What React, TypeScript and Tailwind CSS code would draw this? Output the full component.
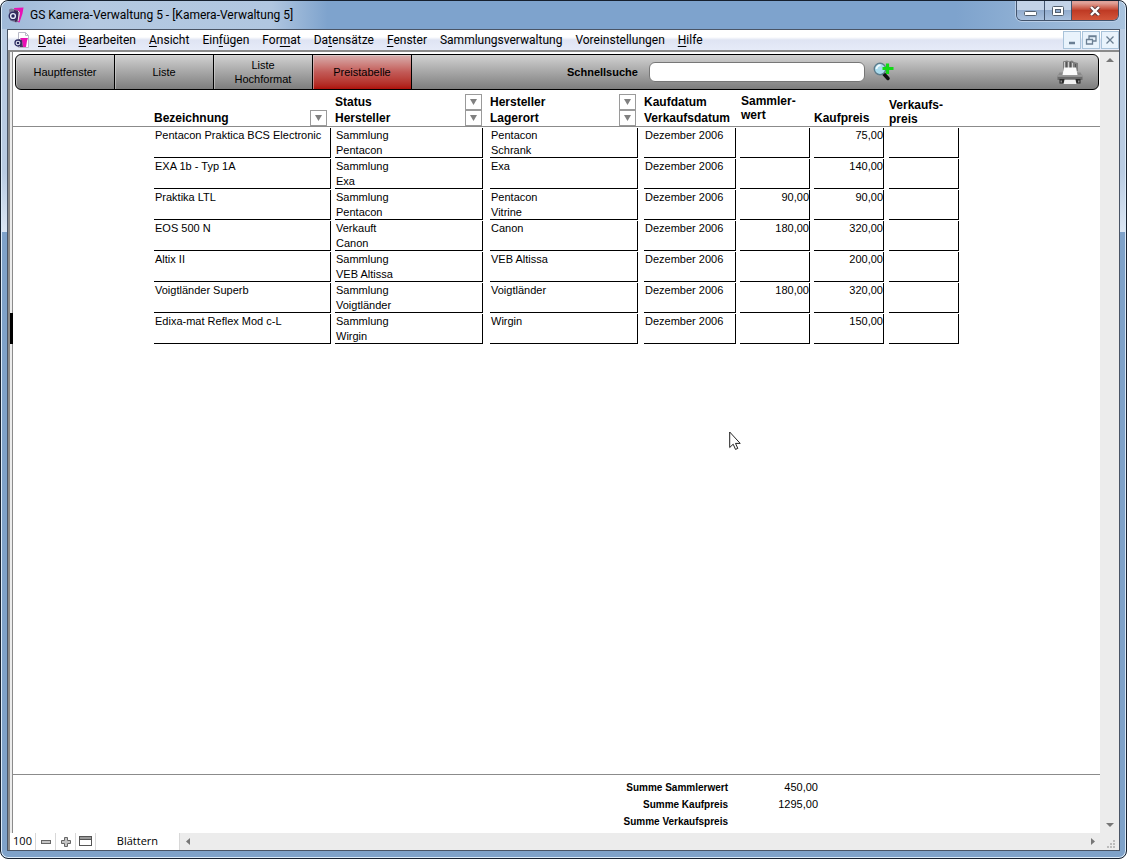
import { Fragment } from "react"

// [before, mnemonic, after]
const menuItems = [
  ["", "D", "atei"],
  ["", "B", "earbeiten"],
  ["", "A", "nsicht"],
  ["Ein", "f", "ügen"],
  ["For", "m", "at"],
  ["Da", "t", "ensätze"],
  ["", "F", "enster"],
  ["Sammlungsverwaltung", "", ""],
  ["Voreinstellungen", "", ""],
  ["", "H", "ilfe"],
]

const tabs = ["Hauptfenster", "Liste", "Liste Hochformat", "Preistabelle"]

const cameras = [
  { name: "Pentacon Praktica BCS Electronic", status: "Sammlung", maker: "Pentacon", place: "Schrank", value: "", price: "75,00" },
  { name: "EXA 1b - Typ 1A", status: "Sammlung", maker: "Exa", place: "", value: "", price: "140,00" },
  { name: "Praktika LTL", status: "Sammlung", maker: "Pentacon", place: "Vitrine", value: "90,00", price: "90,00" },
  { name: "EOS 500 N", status: "Verkauft", maker: "Canon", place: "", value: "180,00", price: "320,00" },
  { name: "Altix II", status: "Sammlung", maker: "VEB Altissa", place: "", value: "", price: "200,00" },
  { name: "Voigtländer Superb", status: "Sammlung", maker: "Voigtländer", place: "", value: "180,00", price: "320,00" },
  { name: "Edixa-mat Reflex Mod c-L", status: "Sammlung", maker: "Wirgin", place: "", value: "", price: "150,00", active: true },
]

const sums = [
  ["Summe Sammlerwert", "450,00"],
  ["Summe Kaufpreis", "1295,00"],
  ["Summe Verkaufspreis", ""],
]

function AppIcon() {
  return (
    <svg viewBox="0 0 16 16" className="h-4 w-4" aria-hidden="true">
      <path d="M6 1l9.500-.5-1 6-3 9-4-1z" fill="#e810b4" />
      <path d="M1 2.500l2-1 7 1.500 2 2-1 9-3 1.500-6-2z" fill="#7d7b98" />
      <path d="M6 3l4 1v10l-3 1z" fill="#3f2b52" />
      <path d="M10 4l1.500 1.500L10 14" fill="none" stroke="#f3d9ee" />
      <circle cx="5" cy="9" r="3.800" fill="#e9ecf7" stroke="#2d2d62" strokeWidth="1.400" />
      <circle cx="5" cy="9" r="1.700" fill="#26265c" />
    </svg>
  )
}

function DocIcon() {
  return (
    <svg viewBox="0 0 16 16" className="h-4 w-4" aria-hidden="true">
      <path d="M4.500 .5h7l3 3v12h-10z" fill="#fff" stroke="#b9b9c6" />
      <path d="M11.500 .5v3h3" fill="none" stroke="#b9b9c6" />
      <path d="M6 6h8l-1 3-1 6H9L8 9z" fill="#e810b4" />
      <path d="M5 7l3 1 1 7H6z" fill="#4b3260" />
      <circle cx="4" cy="11" r="3" fill="#e9ecf7" stroke="#2d2d62" strokeWidth="1.300" />
      <circle cx="4" cy="11" r="1.300" fill="#26265c" />
    </svg>
  )
}

function SearchAddIcon() {
  return (
    <svg viewBox="0 0 21 20" className="h-5 w-[21px]" aria-hidden="true">
      <path d="M10 11l5 5.500" stroke="#111" strokeWidth="3.500" strokeLinecap="round" />
      <circle cx="7" cy="7" r="5.700" fill="#a9dcee" stroke="#5d7c8c" strokeWidth="1.400" />
      <path d="M3.500 7a3.500 3.500 0 0 1 4-3.500" fill="none" stroke="#f2fcff" strokeWidth="1.800" />
      <path d="M14.500 1.500v10.500M9.500 6.500h11" stroke="#12d916" strokeWidth="3.200" />
    </svg>
  )
}

function PrinterIcon() {
  return (
    <svg viewBox="0 0 26 25" className="h-[25px] w-[26px]" aria-hidden="true">
      <path d="M6 1.500l4-1 2 1 3-1 2 1.500 4 1v8H6z" fill="#7d7d7d" />
      <path d="M7.500 2v6M11.500 2v6M15.500 3v6" stroke="#cfcfcf" />
      <path d="M9.500 2v6M13.500 2v6M18.500 4v6" stroke="#565656" />
      <path d="M2.500 12.500h21l2 3.500H.5z" fill="#8a8a8a" />
      <path d="M7 7.500h12l1.500 7.500h-15z" fill="#fbfbfb" />
      <path d="M.5 15.500h25V20H.5z" fill="#6a6a6a" />
      <path d="M.5 15.500h25v1H.5z" fill="#b5b5b5" />
      <path d="M2.500 19h21v4.500h-21z" fill="#2b2b2b" />
      <path d="M7.500 19.500h11l1 4.500h-13z" fill="#f2f2f2" />
      <path d="M3.500 20.500h1.500v2H3.500zM21 20.500h1.500v2H21z" fill="#8e8e8e" />
    </svg>
  )
}

function FilterButton({ label }: { label: string }) {
  return (
    <button aria-label={label} className="flex h-4 w-[17px] items-center justify-center border border-[#9a9a9a] bg-white">
      <svg viewBox="0 0 7 6" className="h-1.5 w-[7px]" aria-hidden="true">
        <path d="M0 0h7L3.500 6z" fill="#808080" />
      </svg>
    </button>
  )
}

function SortHeader({ lines }: { lines: string[] }) {
  return (
    <div className="mr-2 text-[12px] leading-4">
      {lines.map((line) => (
        <div key={line} className="flex justify-between">
          {line}
          <FilterButton label={`${line} sortieren`} />
        </div>
      ))}
    </div>
  )
}

function Cell({ lines, gap, right }: { lines: string[]; gap: string; right?: boolean }) {
  return (
    <td className={`p-0 pt-px ${gap}`}>
      <div className={`h-[30px] whitespace-nowrap border-b border-r border-black leading-[15px] ${right ? "text-right" : "pl-px"}`}>
        {lines.map((line, i) => (
          <div key={i}>{line}</div>
        ))}
      </div>
    </td>
  )
}

function WindowButtons() {
  return (
    <div className="flex h-5 overflow-hidden rounded-b-md border border-t-0 border-[#42546d] shadow-[0_0_0_1px_#b9cde6]">
      <button aria-label="Minimieren" className="flex w-7 items-center justify-center border-r border-[#42546d] bg-linear-to-b from-[#c3d3e7] from-45% via-[#92acce] via-50% to-[#a9c1de]">
        <svg viewBox="0 0 13 12" className="h-3 w-[13px]" aria-hidden="true">
          <rect x=".5" y="6.500" width="12" height="4" rx="1" fill="#fff" stroke="#53606f" />
        </svg>
      </button>
      <button aria-label="Maximieren" className="flex w-[27px] items-center justify-center border-r border-[#42546d] bg-linear-to-b from-[#c3d3e7] from-45% via-[#92acce] via-50% to-[#a9c1de]">
        <svg viewBox="0 0 12 10" className="h-2.5 w-3" aria-hidden="true">
          <rect x=".5" y=".5" width="11" height="9" rx="1" fill="#fff" stroke="#53606f" />
          <rect x="3.500" y="3.500" width="5" height="3" fill="#92acce" stroke="#53606f" />
        </svg>
      </button>
      <button aria-label="Schließen" className="flex w-[46px] items-center justify-center bg-linear-to-b from-[#e0a198] from-10% via-[#bf3a24] via-50% to-[#d3553a]">
        <svg viewBox="0 0 12 10" className="h-2.5 w-3" aria-hidden="true">
          <path d="M2 1l8 8M10 1L2 9" stroke="#5b3a3c" strokeWidth="4.200" />
          <path d="M2 1l8 8M10 1L2 9" stroke="#fff" strokeWidth="2.400" />
        </svg>
      </button>
    </div>
  )
}

function DocumentButtons() {
  const icons = [
    { label: "Fenster minimieren", d: "M3 9h6" },
    { label: "Fenster wiederherstellen", d: "M4 5V2h7v5H8M4 2.500h7M1 5.500h7M1.500 5v5h6V5" },
    { label: "Fenster schließen", d: "M2.500 2.500l7 7M9.500 2.500l-7 7" },
  ]
  return (
    <div className="ml-auto flex gap-px">
      {icons.map((icon) => (
        <button key={icon.label} aria-label={icon.label} className="flex h-[18px] w-[18px] items-center justify-center border border-[#a9c3da] bg-[#e9f3fc]">
          <svg viewBox="0 0 12 12" className="h-3 w-3" aria-hidden="true">
            <path d={icon.d} fill="none" stroke="#6b7f93" strokeWidth={icon.d.length > 30 ? 1.3 : 2.4} />
          </svg>
        </button>
      ))}
    </div>
  )
}

function StatusBar() {
  const cell = "flex h-full items-center justify-center border-r border-[#d8d8d8] bg-white"
  return (
    <footer className="flex h-[17px] shrink-0 items-center bg-[#ececec] font-['Open_Sans',sans-serif] text-[11px] text-black">
      <span className={`${cell} w-[26px]`}>100</span>
      <button aria-label="Verkleinern" className={`${cell} w-5`}>
        <svg viewBox="0 0 12 12" className="h-3 w-3" aria-hidden="true">
          <rect x="1.500" y="4.500" width="9" height="3" fill="#c4c4c4" stroke="#666" />
        </svg>
      </button>
      <button aria-label="Vergrößern" className={`${cell} w-5`}>
        <svg viewBox="0 0 12 12" className="h-3 w-3" aria-hidden="true">
          <path d="M4.500 1.500h3v3h3v3h-3v3h-3v-3h-3v-3h3z" fill="#c4c4c4" stroke="#666" />
        </svg>
      </button>
      <button aria-label="Statusbereich" className={`${cell} w-5`}>
        <svg viewBox="0 0 13 11" className="h-[11px] w-[13px]" aria-hidden="true">
          <rect x=".5" y=".5" width="12" height="9" fill="#fff" stroke="#555" />
          <path d="M1 2h11" stroke="#999" strokeWidth="2" />
          <path d="M1 3.500h11" stroke="#555" />
        </svg>
      </button>
      <button className={`${cell} w-[84px]`}>Blättern</button>
      <div className="flex flex-1 items-center justify-between pl-1.5 pr-3">
        <svg viewBox="0 0 4 7" className="h-[7px] w-1" aria-hidden="true">
          <path d="M4 0v7L0 3.500z" fill="#777" />
        </svg>
        <svg viewBox="0 0 4 7" className="h-[7px] w-1" aria-hidden="true">
          <path d="M0 0v7l4-3.500z" fill="#777" />
        </svg>
      </div>
      <svg viewBox="0 0 8 8" className="mr-1 mt-1 h-2 w-2" aria-hidden="true">
        <path d="M6 0h2v2H6zM3 3h2v2H3zM6 3h2v2H6zM0 6h2v2H0zM3 6h2v2H3zM6 6h2v2H6z" fill="#bcbcbc" />
      </svg>
    </footer>
  )
}

export default function App() {
  return (
    <div className="flex h-screen flex-col overflow-hidden rounded-lg border border-[#16202e] bg-linear-to-b from-[#b9cce3] from-20% via-[#dbe6f3] via-27% to-[#7fa2c9] to-27% px-[6px] pb-[7px] font-['Liberation_Sans',sans-serif] text-black shadow-[inset_0_0_0_1px_#dcebf9]">
      {/* Title bar */}
      <header className="-mx-[5px] flex h-7 shrink-0 items-start justify-between rounded-t-lg bg-[linear-gradient(90deg,#9fb9d8,#b4c9e1_8%,#b0c6e0_24%,#7ea3cd_29%,#7ea3cd_85%,#a9c3de)] pl-1.5 pr-1.5">
        <div className="flex h-7 items-center gap-1.5 font-['Roboto',sans-serif] text-[12px]">
          <AppIcon />
          <h1>GS Kamera-Verwaltung 5 - [Kamera-Verwaltung 5]</h1>
        </div>
        <WindowButtons />
      </header>

      <div className="flex min-h-0 flex-1 flex-col border border-[#4a5566] bg-white">
        {/* Menu */}
        <nav className="flex h-5 shrink-0 items-center bg-linear-to-b from-white from-35% via-[#dfe4f3] via-50% to-[#e6ebf8] pl-1.5 font-['Roboto',sans-serif] text-[12px]">
          <DocIcon />
          <div className="ml-2 flex gap-[13px]">
            {menuItems.map(([before, key, after]) => (
              <button key={before + key + after}>
                {before}
                <u className="underline-offset-2">{key}</u>
                {after}
              </button>
            ))}
          </div>
          <DocumentButtons />
        </nav>

        <div className="flex min-h-0 flex-1 flex-col border-l-2 border-t-2 border-[#8b8b8b]">
          <div className="flex min-h-0 flex-1">
            <div className="w-0.5 bg-[#ececec]" />
            <main className="flex min-w-0 flex-1 flex-col border-l border-[#8b8b8b]">
              {/* Toolbar */}
              <div className="ml-0.5 mr-px mt-0.5 flex h-9 shrink-0 items-center rounded-md border border-black bg-linear-to-b from-[#d2d2d2] to-[#7e7e7e]">
                {tabs.map((tab) => (
                  <button
                    key={tab}
                    className={`h-full w-[99px] border-r border-black px-4 text-[11px] leading-[14px] shadow-[inset_1px_1px_0_#dddddd80] ${
                      tab === "Preistabelle" ? "bg-linear-to-b from-[#d7b0b0] via-[#c25a57] to-[#ad100a]" : "first:rounded-l-md"
                    }`}
                  >
                    {tab}
                  </button>
                ))}
                <label htmlFor="quick-search" className="ml-[155px] text-[11px] font-bold">
                  Schnellsuche
                </label>
                <input id="quick-search" className="ml-[11px] h-5 w-[216px] rounded-md border border-[#777] bg-white px-1 text-[11px]" />
                <button aria-label="Suchen" className="ml-2">
                  <SearchAddIcon />
                </button>
                <button aria-label="Drucken" className="ml-auto mr-[15px]">
                  <PrinterIcon />
                </button>
              </div>

              {/* Price table */}
              <div className="min-h-0 flex-1">
                <table className="w-full table-fixed border-collapse text-left text-[11px]">
                  <colgroup>
                    <col className="w-[141px]" />
                    <col className="w-[181px]" />
                    <col className="w-[155px]" />
                    <col className="w-[154px]" />
                    <col className="w-24" />
                    <col className="w-[74px]" />
                    <col className="w-[75px]" />
                    <col className="w-[70px]" />
                    <col />
                  </colgroup>
                  <thead>
                    <tr className="h-9 border-b border-[#8b8b8b] align-bottom text-[12px] leading-4">
                      <td />
                      <th className="p-0"><SortHeader lines={["Bezeichnung"]} /></th>
                      <th className="p-0"><SortHeader lines={["Status", "Hersteller"]} /></th>
                      <th className="p-0"><SortHeader lines={["Hersteller", "Lagerort"]} /></th>
                      <th className="p-0">Kaufdatum<br />Verkaufsdatum</th>
                      <th className="p-0 pl-px pt-1 align-top leading-[14px]">Sammler-<br />wert</th>
                      <th className="p-0">Kaufpreis</th>
                      <th className="p-0 leading-[14px]">Verkaufs-<br />preis</th>
                      <td />
                    </tr>
                  </thead>
                  <tbody>
                    {cameras.map((camera) => (
                      <tr key={camera.name} className="align-top">
                        {/* the marker of the current record sits in the gutter */}
                        <td className="relative p-0">
                          {camera.active && <div className="absolute -left-[3px] top-0 h-full w-[3px] bg-black" />}
                        </td>
                        <Cell lines={[camera.name]} gap="pr-1" />
                        <Cell lines={[camera.status, camera.maker]} gap="pr-[7px]" />
                        <Cell lines={[camera.maker, camera.place]} gap="pr-1.5" />
                        <Cell lines={["Dezember 2006"]} gap="pr-1" />
                        <Cell lines={[camera.value]} gap="pr-1" right />
                        <Cell lines={[camera.price]} gap="pr-[5px]" right />
                        <Cell lines={[""]} gap="pr-0" />
                        <td />
                      </tr>
                    ))}
                  </tbody>
                </table>
              </div>

              {/* Totals */}
              <dl className="grid h-[59px] shrink-0 grid-cols-[715px_90px] content-start border-t border-[#8b8b8b] pt-1 text-right text-[11px] leading-[17px]">
                {sums.map(([label, value]) => (
                  <Fragment key={label}>
                    <dt className="text-[10px] font-bold">{label}</dt>
                    <dd>{value}</dd>
                  </Fragment>
                ))}
              </dl>
            </main>

            {/* Vertical scroll bar */}
            <div className="flex w-[19px] shrink-0 flex-col items-center justify-between bg-[#ececec] py-1.5">
              <svg viewBox="0 0 8 4" className="h-1 w-2" aria-hidden="true">
                <path d="M0 4h8L4 0z" fill="#777" />
              </svg>
              <svg viewBox="0 0 8 4" className="h-1 w-2" aria-hidden="true">
                <path d="M0 0h8L4 4z" fill="#777" />
              </svg>
            </div>
          </div>
          <StatusBar />
        </div>
      </div>

      {/* Mouse pointer */}
      <svg viewBox="0 0 12 19" className="pointer-events-none absolute left-[729px] top-[431px] h-[19px] w-3" aria-hidden="true">
        <path d="M.7 1v15.500l3.500-3.300 2.300 5.200 2.300-1-2.300-5h4.700z" fill="#fff" stroke="#222" />
      </svg>
    </div>
  )
}
